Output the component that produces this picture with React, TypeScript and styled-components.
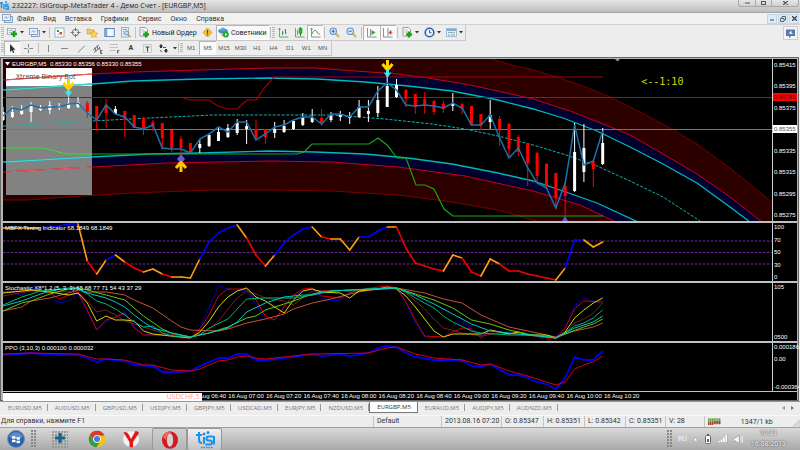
import React from 'react';
import styled, { createGlobalStyle, css } from 'styled-components';

const GlobalStyle = createGlobalStyle`
  * { box-sizing: border-box; }
  body { margin: 0; background: #ededed; font-family: Roboto, "Noto Sans", sans-serif; }
  button { font: inherit; color: inherit; border: 0; padding: 0; margin: 0; background: none; }
`;

const chartFont = '"Liberation Sans", Arial, sans-serif';
const titleFont = '"Open Sans", "Noto Sans", sans-serif';

/* ---------- series data ---------- */

const STEP = 9.37;
const px = (i: number) => Math.round((3 + STEP * i) * 10) / 10;

type Candle = [number, number, number, number, 0 | 1];

/* high, body top, body bottom, low, rising */
const candles: Candle[] = [
  [107, 112, 120, 121, 1], [106, 112, 117, 118, 1], [105, 109, 114, 115, 1], [102, 105, 112, 122, 1],
  [105, 107, 110, 111, 1], [101, 105, 110, 114, 1], [103, 106, 108, 110, 1], [97, 103, 108, 109, 1],
  [97, 102, 107, 108, 1], [101, 103, 112, 118, 0], [106, 106, 120, 131, 0], [99, 105, 113, 128, 0],
  [106, 109, 114, 115, 1], [111, 111, 120, 137, 0], [115, 115, 128, 128, 0], [117, 118, 130, 135, 0],
  [120, 122, 126, 131, 0], [123, 123, 138, 150, 0], [130, 130, 148, 152, 0], [136, 139, 148, 155, 0],
  [143, 143, 152, 153, 0], [139, 144, 148, 153, 1], [134, 135, 146, 147, 1], [127, 132, 141, 141, 1],
  [124, 128, 137, 138, 1], [119, 123, 133, 135, 1], [120, 126, 129, 144, 1], [120, 129, 138, 140, 0],
  [129, 129, 137, 144, 0], [122, 129, 133, 138, 1], [120, 126, 132, 133, 1], [120, 121, 129, 130, 1],
  [113, 117, 125, 126, 1], [109, 118, 122, 123, 1], [109, 118, 124, 126, 0], [112, 116, 120, 122, 1],
  [111, 114, 117, 121, 1], [112, 116, 118, 124, 1], [100, 107, 117, 118, 1], [100, 111, 114, 122, 1],
  [86, 100, 113, 117, 1], [75, 86, 107, 107, 1], [79, 85, 97, 98, 1], [89, 90, 99, 107, 0],
  [94, 94, 107, 114, 0], [92, 99, 106, 114, 0], [100, 101, 112, 115, 0], [101, 104, 109, 113, 0],
  [93, 103, 106, 111, 1], [103, 104, 109, 114, 0], [106, 106, 125, 126, 0], [114, 114, 126, 130, 0],
  [100, 115, 122, 129, 1], [116, 119, 129, 146, 0], [123, 124, 149, 158, 0], [135, 137, 152, 156, 0],
  [143, 143, 163, 186, 0], [152, 153, 176, 183, 0], [163, 164, 185, 188, 0], [173, 173, 198, 208, 0],
  [181, 186, 196, 221, 0], [123, 152, 191, 192, 1], [124, 148, 172, 182, 1], [160, 161, 169, 187, 0],
  [128, 143, 164, 165, 1],
];

const closeLine = [
  116, 108, 110, 105, 108, 107, 107, 104, 103, 113, 120, 105, 114, 117, 127, 129, 125, 148, 149, 149, 153,
  139, 134, 127, 132, 122, 122, 140, 134, 127, 125, 120, 117, 117, 124, 114, 114, 117, 107, 107, 91, 83, 90,
  105, 106, 105, 106, 108, 103, 108, 125, 125, 115, 138, 158, 148, 168, 183, 188, 208, 183, 125, 165, 161, 131,
];

const timing = [
  228, 228, 228, 228, 228, 227, 226, 224, 224, 261, 274, 260, 255, 262, 268, 272, 269, 274, 277, 277, 278,
  259, 242, 233, 228, 225, 238, 255, 266, 255, 243, 235, 229, 227, 237, 239, 239, 250, 237, 237, 231, 227, 227,
  248, 263, 266, 269, 271, 255, 258, 272, 276, 259, 264, 271, 271, 274, 276, 278, 280, 268, 240, 240, 247, 242,
];
const timingRuns =
  'oooobbbb' + 'orobo' + 'rroo' + 'rooo' + 'bbbb' + 'orro' + 'bbbb' + 'orooo' + 'bbbo' + 'rrrrr' + 'oorroo' + 'rrrrrr' + 'obboo';
const runColor: Record<string, string> = { o: '#ff9f0f', r: '#f00000', b: '#0000ff' };

type Sparse = [number, number][];

const stochastic: { color: string; pts: Sparse }[] = [
  { color: '#0000c0', pts: [[0, 293], [1, 292], [2, 296], [3, 288], [4, 289], [5, 295], [6, 303], [7, 301], [8, 293], [10, 330], [11, 322], [12, 317], [13, 312], [14, 327], [15, 334], [17, 335], [20, 338], [21, 328], [22, 308], [23, 286], [24, 289], [26, 291], [27, 304], [28, 319], [29, 320], [30, 306], [31, 296], [32, 291], [33, 288], [34, 298], [35, 301], [36, 300], [37, 292], [38, 290], [40, 288], [42, 288], [43, 303], [44, 323], [45, 337], [47, 337], [48, 327], [49, 319], [50, 330], [51, 335], [52, 330], [54, 333], [57, 335], [59, 337], [60, 328], [61, 306], [62, 298], [63, 301], [64, 304]] },
  { color: '#cc0000', pts: [[0, 292], [2, 291], [4, 290], [5, 293], [6, 299], [7, 295], [8, 293], [9, 310], [10, 330], [11, 320], [12, 317], [13, 313], [14, 328], [15, 335], [17, 335], [19, 338], [20, 338], [21, 329], [22, 315], [23, 296], [24, 289], [26, 289], [27, 300], [28, 316], [29, 320], [30, 307], [31, 295], [32, 289], [33, 288], [34, 296], [36, 298], [37, 293], [38, 290], [40, 287], [41, 286], [42, 288], [43, 302], [44, 320], [45, 336], [47, 337], [48, 332], [49, 328], [50, 329], [51, 338], [52, 330], [54, 334], [55, 332], [56, 335], [58, 338], [59, 338], [60, 328], [61, 309], [62, 301], [64, 302]] },
  { color: '#7d1c1c', pts: [[0, 296], [3, 291], [8, 292], [9, 301], [10, 312], [11, 310], [12, 315], [13, 321], [15, 327], [17, 333], [20, 337], [22, 330], [23, 321], [24, 309], [25, 298], [26, 291], [27, 294], [28, 298], [30, 301], [31, 305], [32, 298], [33, 291], [36, 290], [37, 292], [42, 288], [43, 293], [44, 301], [45, 309], [46, 319], [47, 328], [49, 333], [51, 336], [53, 333], [56, 335], [59, 338], [60, 333], [61, 323], [62, 319], [63, 313], [64, 303]] },
  { color: '#c8503a', pts: [[0, 311], [2, 307], [3, 301], [5, 298], [7, 293], [8, 290], [9, 292], [11, 292], [13, 295], [14, 300], [15, 304], [16, 308], [18, 321], [19, 327], [20, 330], [23, 331], [24, 329], [26, 323], [28, 319], [30, 314], [31, 309], [33, 303], [35, 299], [37, 294], [39, 290], [42, 288], [45, 293], [47, 299], [49, 303], [51, 315], [52, 319], [54, 327], [56, 331], [58, 335], [59, 337], [61, 331], [63, 327], [64, 323]] },
  { color: '#d8d800', pts: [[0, 293], [3, 290], [5, 292], [7, 295], [8, 293], [9, 303], [10, 321], [11, 316], [12, 320], [13, 320], [14, 321], [15, 331], [16, 334], [18, 336], [20, 338], [21, 332], [22, 321], [23, 307], [24, 297], [25, 291], [26, 288], [27, 297], [28, 301], [29, 307], [30, 313], [31, 300], [32, 291], [33, 289], [34, 292], [36, 293], [37, 298], [38, 291], [40, 289], [41, 287], [42, 289], [43, 296], [44, 307], [45, 319], [46, 331], [47, 337], [48, 334], [51, 334], [52, 330], [54, 334], [55, 332], [56, 335], [58, 335], [59, 338], [60, 332], [61, 318], [62, 310], [63, 303], [64, 298]] },
  { color: '#66c800', pts: [[0, 311], [2, 303], [3, 301], [5, 294], [7, 289], [8, 288], [9, 290], [11, 295], [13, 300], [15, 316], [17, 329], [18, 333], [20, 337], [22, 333], [24, 327], [26, 318], [27, 316], [28, 310], [30, 304], [31, 301], [33, 294], [35, 291], [42, 288], [44, 294], [46, 300], [48, 308], [50, 320], [52, 324], [54, 330], [56, 334], [59, 338], [60, 334], [62, 327], [63, 324], [64, 319]] },
  { color: '#00b478', pts: [[0, 305], [2, 297], [4, 291], [6, 289], [8, 289], [9, 294], [10, 301], [11, 304], [12, 309], [13, 315], [14, 322], [15, 327], [16, 326], [17, 333], [18, 336], [20, 337], [21, 335], [22, 328], [24, 319], [25, 309], [26, 299], [28, 298], [31, 298], [33, 295], [34, 292], [37, 290], [41, 288], [42, 288], [43, 292], [44, 298], [46, 308], [47, 316], [48, 322], [50, 331], [51, 333], [54, 335], [57, 335], [59, 338], [60, 333], [61, 326], [62, 323], [63, 318], [64, 310]] },
  { color: '#00c8c8', pts: [[0, 306], [2, 301], [4, 294], [5, 291], [7, 288], [8, 288], [9, 293], [11, 298], [12, 302], [13, 307], [14, 315], [15, 322], [16, 328], [18, 333], [20, 337], [22, 333], [24, 328], [25, 322], [26, 312], [28, 303], [30, 297], [32, 295], [33, 295], [35, 291], [37, 290], [42, 288], [44, 295], [46, 304], [48, 314], [50, 324], [52, 331], [55, 334], [59, 338], [61, 328], [63, 322], [64, 316]] },
];

const ppoMain: Sparse = [[0, 355], [3, 353], [4, 354], [6, 355], [8, 355], [9, 358], [10, 362], [11, 359], [13, 361], [14, 365], [16, 366], [17, 372], [18, 372], [20, 371], [21, 366], [23, 358], [24, 358], [25, 354], [26, 354], [27, 360], [28, 360], [30, 358], [33, 354], [34, 356], [36, 354], [37, 356], [39, 353], [40, 348], [41, 346], [42, 347], [43, 353], [44, 357], [46, 360], [49, 360], [50, 366], [51, 367], [52, 364], [54, 375], [55, 375], [56, 378], [57, 382], [58, 384], [59, 389], [60, 378], [61, 357], [62, 360], [63, 360], [64, 351]];
const ppoSignal: Sparse = [[0, 354], [3, 353], [8, 354], [10, 359], [11, 359], [13, 360], [15, 365], [16, 365], [18, 370], [20, 371], [21, 369], [23, 361], [24, 360], [25, 357], [26, 356], [27, 358], [28, 359], [33, 354], [39, 353], [41, 348], [42, 347], [44, 354], [46, 358], [49, 360], [51, 365], [52, 364], [54, 371], [56, 376], [58, 382], [59, 385], [60, 382], [61, 369], [62, 365], [63, 362], [64, 356]];

const poly = (pts: Sparse) => pts.map(([i, y]) => `${px(i)},${y}`).join(' ');
const dense = (ys: number[]) => ys.map((y, i) => `${px(i)},${y}`).join(' ');

const bandTop = '492,59 512,65 530,69 557,77 583,86 610,97 640,112 672,129 697,144 730,168 772,202';
const upperRed = '3,80 92,74 133,72 200,70 270,68 315,68 355,71 398,74 428,78 465,84 498,91 533,99 570,111 603,124 630,135 663,154 697,174 730,197 762,222';
const upperCyan = '3,90 92,84 133,81 200,79 270,78 317,79 365,82 408,86 452,91 498,100 533,109 563,118 597,131 630,147 663,164 697,183 730,207 750,222';
const midLine = '3,126 92,121 150,118 213,115 270,115 332,115 385,119 432,124 465,129 498,136 533,145 563,154 597,166 630,181 663,197 700,221';
const lowerCyan = '3,162 92,157 150,154 200,153 270,151 315,152 365,154 408,158 452,164 498,173 533,181 563,191 597,203 638,222';
const lowerRed = '3,172 92,167 167,163 270,161 332,162 398,167 465,176 533,191 580,205 616,222';
const bandBottom = '3,200 27,200 67,197 133,193 213,190 270,190 332,191 398,195 445,201 498,210 539,222';
const resistance = '183,98 190,100 209,100 218,106 228,109 237,109 247,100 256,100 265,87 274,77 603,77';
const support = '3,148 43,148 67,154 297,154 304,152 312,144 369,144 378,138 387,145 397,158 406,158 416,185 425,185 434,189 444,209 453,216 603,216';

/* ---------- window chrome ---------- */

const Window = styled.main`
  display: flex;
  flex-direction: column;
  height: 100vh;
  min-height: 420px;
  background: #ededed;
  color: #333;
  font-size: 7px;
  line-height: 10px;
  overflow: hidden;
`;

const TitleBar = styled.header`
  display: flex;
  align-items: center;
  gap: 3px;
  height: 13px;
  flex: none;
  border-bottom: 1px solid #a4a4a4;
  background: linear-gradient(#e6e6e6, #bdbdbd);
`;

const Title = styled.h1`
  margin: 0;
  flex: 1;
  font-family: ${titleFont};
  font-size: 7px;
  line-height: 10px;
  font-weight: 400;
  color: #222;
  white-space: nowrap;
`;

const WindowControls = styled.div`
  display: grid;
  grid-template-columns: 16px 16px 27px;
  align-self: flex-start;
  height: 7px;
  margin-right: 1px;
  border: 1px solid #a8a8a8;
  border-top: 0;
  border-radius: 0 0 3px 3px;
  button { display: grid; place-items: center; }
  button + button { border-left: 1px solid #a8a8a8; }
`;

const MenuBar = styled.nav`
  display: flex;
  align-items: center;
  height: 12px;
  flex: none;
  padding: 0 1px 0 2px;
  border-bottom: 1px solid #d0d0d0;
  background: #f1f1f1;
`;

const MenuItem = styled.button`
  margin-left: 9px;
  line-height: 10px;
  white-space: nowrap;
  &:first-of-type { margin-left: 4px; }
`;

const ChildControls = styled.div`
  display: flex;
  gap: 1px;
  margin-left: auto;
  button {
    display: grid;
    place-items: center;
    width: 10px;
    height: 10px;
    background: #dcebf8;
    border: 1px solid #c2d3e4;
  }
`;

const Toolbar = styled.div<{ $tall?: boolean }>`
  display: flex;
  align-items: stretch;
  flex: none;
  height: ${p => (p.$tall ? 16 : 15)}px;
  padding-left: 1px;
`;

const ToolStrip = styled.div`
  display: flex;
  align-items: stretch;
  border: solid #c8c8c8;
  border-width: 0 1px 1px 0;
`;

const Grip = styled.span`
  width: 3px;
  margin: 2px 0;
  background: repeating-linear-gradient(#b8b8b8 0 1px, transparent 1px 2px);
`;

const Divider = styled.span`
  width: 1px;
  margin: 2px 1px;
  background: #c0c0c0;
`;

const ToolGroup = styled.div<{ $width: number; $count: number }>`
  display: grid;
  width: ${p => p.$width}px;
  grid-template-columns: repeat(${p => p.$count}, 1fr);
`;

const pressedStyle = css`
  background: #f9f9f9;
  box-shadow: inset 1px 1px 0 #b4b4b4, inset -1px -1px 0 #fff;
`;

const ToolButton = styled.button<{ $pressed?: boolean; $width?: number }>`
  display: grid;
  place-items: center;
  ${p => p.$width && `width: ${p.$width}px;`}
  ${p => p.$pressed && pressedStyle}
`;

const DropButton = styled.button`
  display: flex;
  align-items: center;
  width: 22px;
  padding-left: 3px;
  gap: 2px;
`;

const LabelButton = styled.button<{ $pressed?: boolean; $width: number }>`
  display: flex;
  align-items: center;
  gap: 2px;
  width: ${p => p.$width}px;
  padding-left: 2px;
  white-space: nowrap;
  color: #222;
  ${p => p.$pressed && pressedStyle}
`;

const Timeframe = styled(ToolButton)`
  font-family: ${chartFont};
  font-size: 6px;
  color: #555;
`;

const ChatButton = styled.button`
  display: grid;
  place-items: center;
  width: 15px;
  margin: 1px 2px 1px auto;
  border: 1px solid #ccc;
  background: #f4f4f4;
`;

/* ---------- chart area ---------- */

const ChartFrame = styled.section`
  display: flex;
  flex-direction: column;
  flex: 1 1 0;
  min-height: 0;
  margin: 1px 1px 0 0;
  border: solid #b4b4b4;
  border-width: 2px 2px 0 3px;
  outline: 1px solid #666;
  outline-offset: -1px;
  background: #000;
  color: #fff;
  font-family: ${chartFont};
  font-size: 6px;
  line-height: 8px;
`;

const Panel = styled.div<{ $grow: number; $edge?: number }>`
  display: grid;
  grid-template-columns: minmax(0, 1fr) 24px;
  grid-template-rows: minmax(0, 1fr);
  flex: ${p => p.$grow} 1 0;
  min-height: 0;
  border-bottom: ${p => p.$edge ?? 2}px solid #c0c0c0;
`;

const Plot = styled.div`
  position: relative;
  min-width: 0;
  border-right: 1px solid #d0d0d0;
`;

const PlotSvg = styled.svg`
  display: block;
  width: 100%;
  height: 100%;
`;

const PlotTitle = styled.div`
  position: absolute;
  top: 1px;
  left: 2px;
  display: flex;
  align-items: center;
  gap: 2px;
  white-space: pre;
`;

const BotLabel = styled.span`
  position: absolute;
  top: 13px;
  left: 13px;
  font-family: ${titleFont};
  font-size: 7px;
  line-height: 10px;
  color: #444;
`;

const TimerNote = styled.span`
  position: absolute;
  top: 17px;
  left: 83%;
  font-family: "DejaVu Sans Mono", monospace;
  font-size: 10px;
  line-height: 12px;
  color: #d8d800;
`;

const Axis = styled.div<{ $pad?: number }>`
  position: relative;
  display: flex;
  flex-direction: column;
  justify-content: space-between;
  padding: ${p => p.$pad ?? 0}px 0;
`;

const AxisLabel = styled.span<{ $tone?: 'current' | 'alert'; $raised?: boolean }>`
  display: block;
  padding-left: 1px;
  white-space: nowrap;
  ${p => p.$tone === 'current' && 'background: #fff; color: #555;'}
  ${p => p.$tone === 'alert' && 'position: absolute; top: 21%; left: 0; right: 0; background: #f00; color: #700;'}
  ${p => p.$raised && 'margin: 4px 0 auto;'}
`;

const TimeAxis = styled.div`
  position: relative;
  display: grid;
  grid-template-columns: repeat(41, minmax(0, 1fr));
  flex: none;
  height: 9px;
  padding-right: 24px;
`;

const TimeLabel = styled.span<{ $col: number }>`
  grid-column: ${p => p.$col} / span 2;
  grid-row: 1;
  white-space: nowrap;
  line-height: 9px;
`;

const Ticker = styled.div`
  position: absolute;
  inset: 1px 75% 0 0;
  background: #fff;
  color: #ff9c9c;
  font-family: ${titleFont};
  font-size: 7px;
  line-height: 8px;
  text-align: right;
  padding-right: 2px;
`;

/* ---------- bottom bars ---------- */

const TabBar = styled.div`
  display: flex;
  align-items: stretch;
  flex: none;
  height: 14px;
  padding: 0 6px 2px 1px;
  border-top: 1px solid #999;
  color: #777;
`;

const Tab = styled.button<{ $active?: boolean }>`
  position: relative;
  padding: 0 6px 0 7px;
  white-space: nowrap;
  font-family: ${titleFont};
  font-size: 6px;
  ${p =>
    p.$active
      ? 'background: #fff; color: #333; border: solid #777; border-width: 0 1px 1px;'
      : '&::after { content: ""; position: absolute; right: 0; top: 2px; bottom: 2px; width: 1px; background: #999; }'}
`;

const TabScroll = styled.div`
  display: flex;
  gap: 6px;
  margin-left: auto;
  align-items: center;
`;

const StatusBar = styled.footer`
  display: grid;
  grid-template-columns: minmax(0, 1fr) 68px 60px 42px 41px 41px 40px 39px 96px;
  flex: none;
  height: 12px;
  border-top: 1px solid #f8f8f8;
`;

const StatusCell = styled.span`
  padding-left: 3px;
  white-space: nowrap;
  & + & { border-left: 1px solid #c4c4c4; }
  &:first-child { padding-left: 1px; }
`;

const Connection = styled.span`
  display: flex;
  align-items: center;
  gap: 20px;
  padding-left: 3px;
  border-left: 1px solid #c4c4c4;
  white-space: nowrap;
  svg:last-child { margin-left: auto; align-self: flex-end; }
`;

const Taskbar = styled.div`
  display: flex;
  align-items: stretch;
  flex: none;
  height: 23px;
  border-top: 1px solid #a0a0a0;
  background: linear-gradient(#d9d9d9, #a9a9a9);
`;

const TaskButton = styled.button<{ $width: number; $open?: boolean; $focused?: boolean }>`
  display: grid;
  place-items: center;
  width: ${p => p.$width}px;
  ${p => p.$open && 'border: 1px solid #999; border-bottom: 0; border-radius: 2px; background: linear-gradient(#d0d0d0, #b4b4b4);'}
  ${p => p.$focused && 'background: linear-gradient(#f0f0f0, #c4c4c4);'}
`;

const TaskGrip = styled.span`
  align-self: stretch;
  width: 5px;
  margin: 2px 0;
  background: radial-gradient(circle at 1px 1px, #888 0 1px, transparent 1px) 0 0 / 3px 3px;
`;

const Tray = styled.div`
  display: flex;
  align-items: center;
  gap: 6px;
  margin-left: auto;
  padding-right: 14px;
  color: #f6f6f6;
`;

const Clock = styled.time`
  margin-left: 2px;
  text-align: center;
  line-height: 11px;
  color: #fff;
  text-shadow: 0 0 1px #444, 0 0 2px #555;
`;

/* ---------- icons ---------- */

const Icon = styled.svg<{ $size: number }>`
  display: block;
  width: ${p => p.$size}px;
  height: ${p => p.$size}px;
  overflow: visible;
`;

const Ico = ({ children, size = 11 }: { children: React.ReactNode; size?: number }) => (
  <Icon $size={size} viewBox={`0 0 ${size} ${size}`} fill="none" aria-hidden>
    {children}
  </Icon>
);

const Caret = () => (
  <svg width="4" height="3" viewBox="0 0 4 3" aria-hidden><path d="M0 0h4L2 2.5z" fill="#333" /></svg>
);

const Plus = ({ x, y }: { x: number; y: number }) => (
  <path d={`M${x} ${y}m0-3v6m-3-3h6`} stroke="#12a812" strokeWidth="2.4" />
);

const NewChartIcon = () => (
  <Ico><rect x=".5" y="1.5" width="8" height="6" fill="#e8f0f8" stroke="#8fa6bd" strokeWidth=".8" /><path d="M2 3.5h4M2 5.5h3" stroke="#8fb08f" strokeWidth=".8" /><Plus x={7} y={7} /></Ico>
);
const ProfilesIcon = () => (
  <Ico><rect x="2.5" y="3.5" width="8" height="6" fill="#d8e4f0" stroke="#6f93bd" strokeWidth=".8" /><rect x=".5" y="1.5" width="8" height="6" fill="#eef4fa" stroke="#6f93bd" strokeWidth=".8" /><path d="M2 5.5l2-2 1 2 2-2" stroke="#6f93bd" strokeWidth=".8" /></Ico>
);
const MarketIcon = () => (
  <Ico><rect x="1" y="1" width="9" height="9" fill="#fff" stroke="#8fb4dc" /><rect x="3" y="3" width="2" height="2" fill="#2a9a2a" /><rect x="5.5" y="5" width="2.5" height="2.5" fill="#e04020" /><path d="M3 7.5h2" stroke="#bbb" /></Ico>
);
const NavigatorIcon = () => (
  <Ico><circle cx="5.5" cy="5.5" r="3.2" stroke="#777" /><path d="M5.5 .5v3.500M5.5 7v3.500M.5 5.500h3.500M7 5.500h3.500" stroke="#777" /></Ico>
);
const FavoritesIcon = () => (
  <Ico><path d="M0 2h3l1 1h3v4H0z" fill="#f2cf63" stroke="#b8963a" strokeWidth=".6" /><path d="M7 3.5l1.200 2.300 2.600.3-1.900 1.800.5 2.600L7 9.300l-2.400 1.200.5-2.600L3.200 6.100l2.600-.3z" fill="#ffd94a" stroke="#c09020" strokeWidth=".5" /></Ico>
);
const TerminalIcon = () => (
  <Ico><rect x=".8" y="1.500" width="9.400" height="8" fill="#f4f8ff" stroke="#5a88c4" strokeWidth="1" /><rect x="1.200" y="2" width="2" height="7" fill="#7ba0cf" /></Ico>
);
const TesterIcon = () => (
  <Ico><rect x="1.500" y=".5" width="7" height="9.500" fill="#e8eef5" stroke="#8aa2bb" strokeWidth=".8" /><path d="M3 2.500h4M3 4.500h1M3 6.500h1" stroke="#7a92ab" strokeWidth=".8" /><circle cx="6.500" cy="6" r="2" fill="#cfe4fa" stroke="#5a82b0" strokeWidth=".8" /><path d="M8 7.500l2.500 2.500" stroke="#d09a30" strokeWidth="1.400" /></Ico>
);
const OrderIcon = () => (
  <Ico><path d="M1 .5h5.500l2 2V9H1z" fill="#fafafa" stroke="#888" strokeWidth=".8" /><path d="M2.500 3h3M2.500 5h4" stroke="#999" strokeWidth=".7" /><Plus x={7} y={7.5} /></Ico>
);
const WarnIcon = () => (
  <Ico><path d="M5.500 1l4.500 4.500-4.500 4.500L1 5.500z" fill="#f5c32c" stroke="#c09a2c" strokeWidth=".8" /><path d="M5.500 3v3.500M5.500 7.300v1" stroke="#5b4708" strokeWidth="1.200" /></Ico>
);
const ExpertIcon = () => (
  <Ico><path d="M2 5c0 6 6 6 6 0z" fill="#f0c860" /><ellipse cx="5" cy="4" rx="4.800" ry="2.200" fill="#3f90cc" /><path d="M2.200 3.500C2.200-.5 7.800-.5 7.800 3.500z" fill="#5aaae0" /><circle cx="7.800" cy="7.500" r="3" fill="#22a63a" /><path d="M7 6l2.300 1.500L7 9z" fill="#fff" /></Ico>
);
const BarsIcon = () => (
  <Ico><path d="M1.500 1v9h9M.5 2.500l1-1.500 1 1.500" stroke="#777" strokeWidth=".8" /><path d="M4.500 4v4M4.500 6h1M7.500 2v5M6.500 3h1M7.500 6h1" stroke="#2a9a4a" /></Ico>
);
const CandlesIcon = () => (
  <Ico><path d="M1.500 1v9h9M3.500 3v5" stroke="#777" strokeWidth=".8" /><path d="M6.500 0v9" stroke="#168a16" /><rect x="5" y="1.500" width="3" height="5" fill="#1cc41c" stroke="#168a16" strokeWidth=".5" /></Ico>
);
const LineIcon = () => (
  <Ico><path d="M1.500 1v9h9M.5 2.500l1-1.500 1 1.500" stroke="#777" strokeWidth=".8" /><path d="M2 7c2-5 4-4 5-2s2 2 3 2" stroke="#2aa04a" /></Ico>
);
const ZoomIcon = ({ plus }: { plus?: boolean }) => (
  <Ico><path d="M6.500 6.500l3.500 3.500" stroke="#d9b050" strokeWidth="2" /><circle cx="4.200" cy="4.200" r="3.200" fill="#dceefb" stroke="#5a94cc" strokeWidth="1.100" /><path d={plus ? 'M2.500 4.200h3.400M4.200 2.500v3.400' : 'M2.500 4.200h3.400'} stroke="#2a62a8" /></Ico>
);
const ScrollIcon = () => (
  <Ico><path d="M1.500 1v9h9M4.500 2v7" stroke="#777" strokeWidth=".8" /><path d="M5.500 3l4 2.500-4 2.500z" fill="#2aa83a" /></Ico>
);
const ShiftIcon = () => (
  <Ico><path d="M1.500 1v9h9M6 1v8" stroke="#5a76a0" strokeWidth=".8" /><path d="M10.500 5.500h-3M9 3.500l-2 2 2 2z" stroke="#c83a20" fill="#c83a20" strokeWidth=".6" /></Ico>
);
const ClockIcon = () => (
  <Ico><circle cx="5.500" cy="5.500" r="4.300" fill="#eaf4ff" stroke="#2464b8" strokeWidth="1.600" /><path d="M5.500 3v2.700h2" stroke="#333" strokeWidth=".8" /></Ico>
);
const TemplateIcon = () => (
  <Ico><rect x=".5" y="1.500" width="10" height="8" fill="#eef6fc" stroke="#8ab0d0" strokeWidth=".8" /><path d="M1 3h9" stroke="#4d83b8" strokeWidth="1.300" /><path d="M2 6l2-1 1 1 2-1 2 1M2 8h2M5 8h4" stroke="#5c8a8a" strokeWidth=".8" /></Ico>
);
const ArrowCursorIcon = () => (
  <Ico><path d="M3 1v8l1.800-1.700L6 10l1.300-.6-1.200-2.600h2.400z" fill="#333" /></Ico>
);
const stroke = { stroke: '#888', strokeWidth: 1 };
const CrossIcon = () => <Ico><path d="M5.500 1v3.500M5.500 6.500V10M1 5.500h3.500M6.500 5.500H10" {...stroke} /></Ico>;
const VLineIcon = () => <Ico><path d="M5.500 2v7" {...stroke} /></Ico>;
const HLineIcon = () => <Ico><path d="M2 5.500h7" {...stroke} /></Ico>;
const TrendIcon = () => <Ico><path d="M2 9.500l7-7" {...stroke} /></Ico>;
const ChannelIcon = () => (
  <Ico><path d="M1 7l6-5M2 9.500l6-5M3 4.500l1 4M5 2.500l1 4M7.500 4l.5 3" stroke="#555" strokeWidth=".8" /><path d="M10.500 7.500h-2v3h2M8.500 9h1.500" stroke="#333" strokeWidth=".7" /></Ico>
);
const FiboIcon = () => (
  <Ico><path d="M1 1.500h8M1 4.500h8M1 7.500h6" stroke="#999" strokeWidth=".8" strokeDasharray="1 .5" /><path d="M10.500 7.500h-2v3M8.500 9h1.500" stroke="#444" strokeWidth=".7" /></Ico>
);
const LabelIcon = () => (
  <Ico><rect x="1.500" y="1.500" width="8" height="8" stroke="#999" strokeWidth=".8" strokeDasharray="1 1" /><path d="M3.500 4h4M5.500 4v4.500" stroke="#444" strokeWidth="1.100" /></Ico>
);
const ShapesIcon = () => (
  <Ico><path d="M3 1l2.200 2.500H4V5H2V3.500H.8zM8 10L5.800 7.500H7V6h2v1.500h1.200z" fill="#333" /><path d="M5 4.500l3 0M2 7.500l2 1" stroke="#555" /></Ico>
);

const TerminalLogo = () => (
  <svg width="9" height="10" viewBox="0 0 9 10" aria-hidden>
    <path d="M0 2h3M1.500 1v6M4 3v5M8.500 3.500H6v2h2.500v2.500H5.500" stroke="#1693ee" strokeWidth="1.400" fill="none" /><circle cx="6" cy="1" r="1" fill="#1693ee" />
  </svg>
);

/* arrow markers on the price chart */
const SignalDown = ({ x, y }: { x: number; y: number }) => (
  <g transform={`translate(${x} ${y})`}>
    <path d="M0-6V3M-5-2L0 4 5-2" stroke="#ffd400" strokeWidth="3" fill="none" />
    <path d="M-4 6L0 12l4-6-2.500 1V4h-3v3z" fill="#3fe6f0" />
  </g>
);
const SignalUp = ({ x, y }: { x: number; y: number }) => (
  <g transform={`translate(${x} ${y})`}>
    <path d="M0 6V-4M-5 2L0-4 5 2" stroke="#ffc400" strokeWidth="3" fill="none" />
    <path d="M-4-7L0-12l4 5-1.500 2h-5z" fill="#6a5ad0" />
  </g>
);

/* ---------- sections ---------- */

const menus = ['Файл', 'Вид', 'Вставка', 'Графики', 'Сервис', 'Окно', 'Справка'];
const frames = ['M1', 'M5', 'M15', 'M30', 'H1', 'H4', 'D1', 'W1', 'MN'];
const tabs = ['EURUSD,M5', 'AUDUSD,M5', 'GBPUSD,M5', 'USDJPY,M5', 'GBPJPY,M5', 'USDCAD,M5', 'EURJPY,M5', 'NZDUSD,M5', 'EURGBP,M5', 'EURAUD,M5', 'AUDJPY,M5', 'AUDNZD,M5'];
const times = ['06:40', '07:00', '07:20', '07:40', '08:00', '08:20', '08:40', '09:00', '09:20', '09:40', '10:00', '10:20'];
const prices = ['0.85415', '0.85395', '0.85375', '0.85355', '0.85335', '0.85315', '0.85295', '0.85275'];

const StandardToolbar = () => (
  <Toolbar $tall>
    <ToolStrip>
      <Grip />
      <DropButton aria-label="New chart"><NewChartIcon /><Caret /></DropButton>
      <DropButton aria-label="Profiles"><ProfilesIcon /><Caret /></DropButton>
      <Divider />
      <ToolGroup $width={83} $count={5}>
        <ToolButton aria-label="Market watch"><MarketIcon /></ToolButton>
        <ToolButton aria-label="Data window"><NavigatorIcon /></ToolButton>
        <ToolButton aria-label="Navigator"><FavoritesIcon /></ToolButton>
        <ToolButton aria-label="Terminal"><TerminalIcon /></ToolButton>
        <ToolButton aria-label="Strategy tester"><TesterIcon /></ToolButton>
      </ToolGroup>
      <Divider />
      <LabelButton $width={62}><OrderIcon />Новый Ордер</LabelButton>
      <ToolButton $width={17} aria-label="Editor"><WarnIcon /></ToolButton>
      <LabelButton $width={53} $pressed aria-pressed><ExpertIcon />Советники</LabelButton>
      <Divider />
      <Grip />
      <ToolGroup $width={48} $count={3}>
        <ToolButton aria-label="Bar chart"><BarsIcon /></ToolButton>
        <ToolButton aria-label="Candlesticks"><CandlesIcon /></ToolButton>
        <ToolButton aria-label="Line chart" $pressed><LineIcon /></ToolButton>
      </ToolGroup>
      <Divider />
      <ToolGroup $width={34} $count={2}>
        <ToolButton aria-label="Zoom in"><ZoomIcon plus /></ToolButton>
        <ToolButton aria-label="Zoom out"><ZoomIcon /></ToolButton>
      </ToolGroup>
      <Divider />
      <ToolGroup $width={33} $count={2}>
        <ToolButton aria-label="Auto scroll" $pressed><ScrollIcon /></ToolButton>
        <ToolButton aria-label="Chart shift" $pressed><ShiftIcon /></ToolButton>
      </ToolGroup>
      <Divider />
      <DropButton aria-label="Indicators"><OrderIcon /><Caret /></DropButton>
      <DropButton aria-label="Periods"><ClockIcon /><Caret /></DropButton>
      <DropButton aria-label="Templates"><TemplateIcon /><Caret /></DropButton>
    </ToolStrip>
    <ChatButton aria-label="Community">
      <Ico><path d="M1 1.500h9v6.500H6l-2 2.500V8H1z" fill="#5878b0" /><path d="M3.500 5.500L6.500 2.500v3zM5.500 5h2v1h-2z" fill="#fff" /></Ico>
    </ChatButton>
  </Toolbar>
);

const DrawingToolbar = () => (
  <Toolbar>
    <ToolStrip>
      <Grip />
      <ToolButton $width={16} $pressed aria-label="Cursor"><ArrowCursorIcon /></ToolButton>
      <ToolButton $width={17} aria-label="Crosshair"><CrossIcon /></ToolButton>
      <Divider />
      <ToolGroup $width={132} $count={8}>
        <ToolButton aria-label="Vertical line"><VLineIcon /></ToolButton>
        <ToolButton aria-label="Horizontal line"><HLineIcon /></ToolButton>
        <ToolButton aria-label="Trend line"><TrendIcon /></ToolButton>
        <ToolButton aria-label="Channel"><ChannelIcon /></ToolButton>
        <ToolButton aria-label="Fibonacci"><FiboIcon /></ToolButton>
        <ToolButton><b>A</b></ToolButton>
        <ToolButton aria-label="Text label"><LabelIcon /></ToolButton>
        <ToolButton aria-label="Arrows"><ShapesIcon /></ToolButton>
      </ToolGroup>
      <ToolButton $width={5} aria-label="More arrows"><Caret /></ToolButton>
      <Divider />
      <Grip />
      <ToolGroup $width={148} $count={9}>
        {frames.map(f => <Timeframe key={f} $pressed={f === 'M5'}>{f}</Timeframe>)}
      </ToolGroup>
    </ToolStrip>
  </Toolbar>
);

const PricePlot = () => (
  <PlotSvg viewBox="3 59 769 162" preserveAspectRatio="none" fill="none">
    <polygon points={`3,59 ${bandTop} 772,222 3,222`} fill="#2d0000" />
    <polygon points={`${upperRed} 3,222`} fill="#00002f" />
    <polygon points={`${upperCyan} 3,222`} fill="#000" />
    <polygon points={`${lowerCyan} 3,222`} fill="#00002f" />
    <polygon points={`${lowerRed} 3,222`} fill="#2d0000" />
    <polygon points={`${bandBottom} 3,222`} fill="#000" />
    <rect x="6" y="68" width="86" height="127" fill="#828282" />
    <rect x="6" y="68" width="86" height="18" fill="#fff" />
    <polyline points={bandTop} stroke="#6a0000" />
    <polyline points={bandBottom} stroke="#7a0000" />
    <polyline points={upperRed} stroke="#c80018" />
    <polyline points={lowerRed} stroke="#c80018" />
    <polyline points={upperCyan} stroke="#00b8b8" strokeWidth="1.300" />
    <polyline points={lowerCyan} stroke="#00b8b8" strokeWidth="1.300" />
    <polyline points={midLine} stroke="#10b4b4" strokeDasharray="3 1.500" />
    <path d="M6 80L92 74M6 172L92 167" stroke="#f06060" />
    <path d="M6 90L92 84M6 162L92 157" stroke="#50d8d8" />
    <path d="M3 97.500H772" stroke="#cc0000" />
    <path d="M3 129.500H772" stroke="#6d7885" />
    <polyline points={resistance} stroke="#a80000" strokeWidth="1.200" />
    <polyline points={support} stroke="#18a810" strokeWidth="1.200" />
    <path d="M6 148H43L67 154H92" stroke="#5fd45f" />
    {candles.map(([hi, top, bottom, lo, up], i) => (
      <g key={i} fill={up ? '#fff' : '#f00'}>
        <rect x={px(i) - 0.5} y={hi} width="1" height={lo - hi} />
        <rect x={px(i) - 1.5} y={top} width="3" height={bottom - top} />
      </g>
    ))}
    <polyline points={dense(closeLine)} stroke="#1a72b0" strokeWidth="1.500" />
    <SignalDown x={68.5} y={85} />
    <SignalDown x={387.5} y={66} />
    <SignalUp x={181} y={166} />
    <path d="M562 221l3-5 3 5z" fill="#5a5ad8" />
    <path d="M615 59h5l-2.500 2.500z" fill="#8899a6" />
  </PlotSvg>
);

const ChartWindow = () => (
  <ChartFrame>
    <Panel $grow={162}>
      <Plot>
        <PricePlot />
        <PlotTitle>
          <svg width="5" height="4" viewBox="0 0 5 4" aria-hidden><path d="M0 0h5L2.500 3.500z" fill="#fff" /></svg>
          {'EURGBP,M5  0.85330 0.85356 0.85330 0.85355'}
        </PlotTitle>
        <BotLabel>Xtreme Binary Bot</BotLabel>
        <TimerNote>{'<--1:10'}</TimerNote>
      </Plot>
      <Axis $pad={2}>
        {prices.map(p => <AxisLabel key={p} $tone={p === '0.85355' ? 'current' : undefined}>{p}</AxisLabel>)}
        <AxisLabel $tone="alert">0.85385</AxisLabel>
      </Axis>
    </Panel>
    <Panel $grow={58}>
      <Plot>
        <PlotSvg viewBox="3 223 769 58" preserveAspectRatio="none" fill="none">
          <path d="M3 241H772M3 252.500H772M3 264H772" stroke="#7a22a8" strokeDasharray="2.500 1.500" />
          {timing.slice(1).map((y, i) => (
            <path key={i} d={`M${px(i)} ${timing[i]}L${px(i + 1)} ${y}`} stroke={runColor[timingRuns[i]]} strokeWidth="1.600" strokeLinecap="round" />
          ))}
        </PlotSvg>
        <PlotTitle>MBFX Timing Indicator 68.1849 68.1849</PlotTitle>
      </Plot>
      <Axis>
        {['100', '70', '50', '30', '0'].map(v => <AxisLabel key={v}>{v}</AxisLabel>)}
      </Axis>
    </Panel>
    <Panel $grow={58}>
      <Plot>
        <PlotSvg viewBox="3 283 769 58" preserveAspectRatio="none" fill="none">
          {stochastic.map(s => <polyline key={s.color} points={poly(s.pts)} stroke={s.color} strokeWidth="1" />)}
        </PlotSvg>
        <PlotTitle>Stochastic X8*1,2 (5, 3, 3) 65 68 77 71 54 43 37 29</PlotTitle>
      </Plot>
      <Axis>
        <AxisLabel>105</AxisLabel>
        <AxisLabel>0500</AxisLabel>
      </Axis>
    </Panel>
    <Panel $grow={48} $edge={1}>
      <Plot>
        <PlotSvg viewBox="3 343 769 48" preserveAspectRatio="none" fill="none">
          <polyline points={poly(ppoMain)} stroke="#0000f0" strokeWidth="1.800" />
          <polyline points={poly(ppoSignal)} stroke="#d40010" />
        </PlotSvg>
        <PlotTitle>PPO (3,10,3) 0.000100 0.000032</PlotTitle>
      </Plot>
      <Axis>
        <AxisLabel>0.000186</AxisLabel>
        <AxisLabel $raised>0.00</AxisLabel>
        <AxisLabel>-0.000364</AxisLabel>
      </Axis>
    </Panel>
    <TimeAxis>
      {times.map((t, i) => <TimeLabel key={t} $col={11 + i * 2}>16 Aug {t}</TimeLabel>)}
      <Ticker>USDCHF,5</Ticker>
    </TimeAxis>
  </ChartFrame>
);

const StatusStrip = () => (
  <StatusBar>
    <StatusCell>Для справки, нажмите F1</StatusCell>
    <StatusCell>Default</StatusCell>
    <StatusCell>2013.08.16 07:20</StatusCell>
    <StatusCell>O: 0.85347</StatusCell>
    <StatusCell>H: 0.85351</StatusCell>
    <StatusCell>L: 0.85342</StatusCell>
    <StatusCell>C: 0.85351</StatusCell>
    <StatusCell>V: 28</StatusCell>
    <Connection>
      <svg width="14" height="7" viewBox="0 0 14 7" aria-hidden>
        <path d="M0 2.500h14" stroke="#6a9a4a" strokeWidth="5" strokeDasharray="1.500 .5" />
        <path d="M0 6h6M6 5h8" stroke="#b03030" strokeWidth="3" strokeDasharray="1.500 .5" />
      </svg>
      1347/1 kb
      <svg width="8" height="8" viewBox="0 0 8 8" aria-hidden><path d="M0 8l8-8M3 8l5-5M6 8l2-2" stroke="#aaa" /></svg>
    </Connection>
  </StatusBar>
);

const TaskStrip = () => (
  <Taskbar>
    <TaskButton $width={31} aria-label="Start">
      <Ico size={18}>
        <circle cx="9" cy="9" r="8.500" fill="#2d62ac" stroke="#6f8db5" strokeWidth=".8" />
        <path d="M2 7a7.500 7.500 0 0 1 14 0q-7 3-14 0z" fill="#7fa6d8" opacity=".6" />
        <path d="M5 6.500q2-1 3.500 0V9q-2-1-3.500 0zM9.500 6.800q1.500 1 3.500 0v2.500q-2 1-3.500 0zM5 10q2-1 3.500 0v2.500q-2-1-3.500 0zM9.500 10.300q1.500 1 3.500 0v2.500q-2 1-3.500 0z" fill="#fff" />
      </Ico>
    </TaskButton>
    <TaskGrip />
    <TaskButton $width={48} aria-label="Launcher">
      <Ico size={18}>
        <path d="M1 2h16M1 5h16M1 8h16M1 11h16M1 14h16M1 17h16" stroke="#999" strokeWidth="2" strokeDasharray="2 1" />
        <path d="M9 3v10M4 8h10" stroke="#12648c" strokeWidth="3" />
      </Ico>
    </TaskButton>
    <TaskButton $width={26} aria-label="Chrome">
      <Ico size={18}>
        <circle cx="9" cy="9" r="8.300" fill="#f2c311" />
        <path d="M1.800 4.900A8.300 8.300 0 0 1 16.500 5.500H9A3.800 3.800 0 0 0 5.500 10.500z" fill="#dc3a2b" />
        <path d="M1.800 4.900A8.300 8.300 0 0 0 8.500 17.300L12.300 11A3.800 3.800 0 0 1 5.500 10.500z" fill="#2f9e49" />
        <circle cx="9" cy="9" r="3.800" fill="#fff" /><circle cx="9" cy="9" r="3" fill="#3f7ee0" />
      </Ico>
    </TaskButton>
    <TaskButton $width={42} aria-label="Yandex">
      <Ico size={18}>
        <circle cx="9" cy="9" r="8.300" fill="#f2f2f2" stroke="#bbb" strokeWidth=".5" />
        <path d="M1.500 2.500Q5 1 7 5l2 4 4.500-8q2.500 0 3.500 2L11 12v5.200H7.500V12z" fill="#e01818" />
      </Ico>
    </TaskButton>
    <TaskButton $width={35} $open aria-label="Opera">
      <Ico size={18}>
        <ellipse cx="9" cy="9" rx="8" ry="8.800" fill="#d41a20" /><ellipse cx="9" cy="9" rx="3.200" ry="6.800" fill="#cfcfcf" />
        <path d="M2 6Q5-1 11 1.200 6 1 5 9z" fill="#f06a6a" />
      </Ico>
    </TaskButton>
    <TaskButton $width={35} $open $focused aria-label="MetaTrader">
      <Ico size={18}>
        <path d="M0 4h6M3 1v8q0 3 3 3M8 6v7M17 5.500h-4.500q-2 0-2 2t2 2H14q2 0 2 2t-2 2H9.500M18 5v8.500" stroke="#1693ee" strokeWidth="2" />
        <circle cx="8" cy="3" r="1.500" fill="#1693ee" /><circle cx="12" cy="1.500" r="1.500" fill="#1693ee" />
        <path d="M5 16.500h12" stroke="#1693ee" strokeWidth="1.500" strokeDasharray="1.500 1" />
      </Ico>
    </TaskButton>
    <Tray>
      <TaskGrip />
      <span>RU</span>
      <svg width="5" height="4" viewBox="0 0 5 4" aria-hidden><path d="M0 4h5L2.500 0z" fill="#fff" stroke="#666" strokeWidth=".4" /></svg>
      <svg width="8" height="10" viewBox="0 0 8 10" aria-hidden><rect x="1.500" y="1.500" width="5" height="8" rx="1" fill="#fff" stroke="#666" /><path d="M3 .5h2" stroke="#555" /><path d="M3 5h2v3H3z" fill="#666" /></svg>
      <svg width="10" height="8" viewBox="0 0 10 8" aria-hidden><path d="M1 8V6M3.500 8V4.500M6 8V2.500M8.500 8V0" stroke="#fff" strokeWidth="1.600" /><path d="M0 8h10V0" stroke="#777" strokeWidth=".7" fill="none" /></svg>
      <svg width="9" height="9" viewBox="0 0 9 9" aria-hidden><path d="M0 3h2l3-3v9L2 6H0z" fill="#fff" stroke="#777" strokeWidth=".5" /><path d="M6.500 2.500q1.500 2 0 4M8 1q2 3.500 0 7" stroke="#fff" strokeWidth=".8" fill="none" /></svg>
      <Clock>10:31<br />16.08.2013</Clock>
    </Tray>
  </Taskbar>
);

export default function App() {
  return (
    <Window>
      <GlobalStyle />
      <TitleBar>
        <TerminalLogo />
        <Title>232227: ISIGroup-MetaTrader 4 - Демо Счет - [EURGBP,M5]</Title>
        <WindowControls>
          <button aria-label="Minimize"><svg width="5" height="2" viewBox="0 0 5 2"><path d="M0 1h5" stroke="#555" /></svg></button>
          <button aria-label="Restore"><svg width="5" height="4" viewBox="0 0 5 4"><rect x=".5" y=".5" width="4" height="3" fill="none" stroke="#555" /></svg></button>
          <button aria-label="Close"><svg width="5" height="4" viewBox="0 0 5 4"><path d="M0 0l5 4M5 0L0 4" stroke="#555" strokeWidth="1.300" /></svg></button>
        </WindowControls>
      </TitleBar>
      <MenuBar>
        <ProfilesIcon />
        {menus.map(m => <MenuItem key={m}>{m}</MenuItem>)}
        <ChildControls>
          <button aria-label="Minimize chart"><svg width="5" height="5" viewBox="0 0 5 5"><path d="M0 4h4" stroke="#345" /></svg></button>
          <button aria-label="Restore chart"><svg width="6" height="6" viewBox="0 0 6 6"><path d="M2 2V.5h3.500V4H4M.5 2.500H4v3H.5z" fill="none" stroke="#567" /></svg></button>
          <button aria-label="Close chart"><svg width="5" height="5" viewBox="0 0 5 5"><path d="M0 0l5 5M5 0L0 5" stroke="#345" strokeWidth="1.300" /></svg></button>
        </ChildControls>
      </MenuBar>
      <StandardToolbar />
      <DrawingToolbar />
      <ChartWindow />
      <TabBar>
        {tabs.map(t => <Tab key={t} $active={t === 'EURGBP,M5'}>{t}</Tab>)}
        <TabScroll>
          <svg width="3" height="4" viewBox="0 0 3 4"><path d="M3 0v4L0 2z" fill="#999" /></svg>
          <svg width="3" height="4" viewBox="0 0 3 4"><path d="M0 0v4l3-2z" fill="#777" /></svg>
        </TabScroll>
      </TabBar>
      <StatusStrip />
      <TaskStrip />
    </Window>
  );
}
